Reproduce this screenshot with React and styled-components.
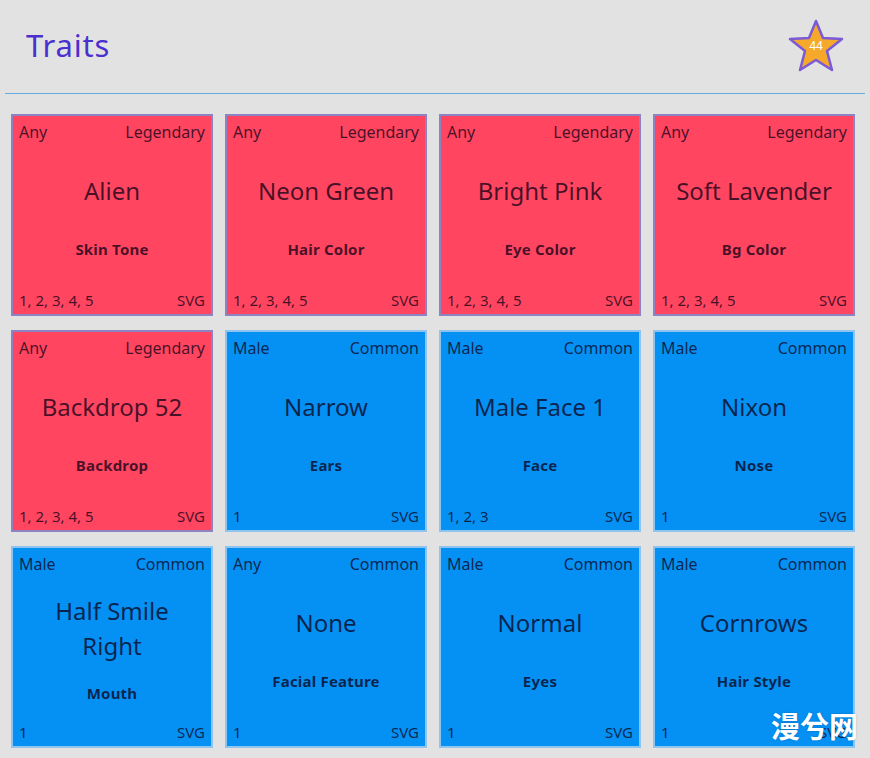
import React from 'react';
import styled, { createGlobalStyle } from 'styled-components';

const GlobalStyle = createGlobalStyle`
  body {
    margin: 0;
    background: #e2e2e2;
    font-family: "Noto Sans", "Liberation Sans", sans-serif;
  }
`;

const Page = styled.div`
  position: relative;
  width: 870px;
  height: 758px;
  overflow: hidden;
  background: #e2e2e2;
`;

const Header = styled.header`
  display: flex;
  align-items: center;
  justify-content: space-between;
  height: 93px;
  margin: 0 5px;
  padding: 0 20px 0 21px;
  border-bottom: 1px solid #68ade0;
`;

const Title = styled.h1`
  margin: 0 0 4px;
  font-size: 31px;
  font-weight: 400;
  color: #4a30cf;
  letter-spacing: 0.8px;
`;

const StarWrap = styled.div`
  position: relative;
  width: 58px;
  height: 56px;
  margin-bottom: 2px;
`;

const StarCount = styled.span`
  position: absolute;
  left: 0;
  right: 0;
  top: 21px;
  text-align: center;
  font-size: 12px;
  color: #ffffff;
  line-height: 14px;
`;

const Grid = styled.div`
  display: grid;
  grid-template-columns: repeat(4, 202px);
  grid-auto-rows: 202px;
  column-gap: 12px;
  row-gap: 14px;
  padding: 20px 0 0 11px;
`;

const Card = styled.div`
  box-sizing: border-box;
  display: flex;
  flex-direction: column;
  padding: 6px 6px 4px;
  background: ${p => (p.$legendary ? '#ff4560' : '#0590f4')};
  border: 2px solid ${p => (p.$legendary ? '#8c84c2' : '#8ec4ee')};
  color: rgba(10, 0, 20, 0.75);
`;

const Row = styled.div`
  display: flex;
  justify-content: space-between;
  font-size: ${p => (p.$top ? '16px' : '15px')};
  line-height: 20px;
`;

const Middle = styled.div`
  flex: 1;
  display: flex;
  flex-direction: column;
  justify-content: space-evenly;
  align-items: center;
  text-align: center;
  padding: 0 8px;
`;

const Name = styled.div`
  font-size: 24px;
  line-height: 35px;
`;

const Category = styled.div`
  font-size: 15px;
  font-weight: 700;
  line-height: 20px;
  letter-spacing: 0.2px;
`;

const Watermark = styled.div`
  position: absolute;
  right: 12px;
  bottom: 12px;
  font-family: "Noto Sans CJK SC", sans-serif;
  font-size: 29px;
  font-weight: 700;
  color: #ffffff;
  text-shadow: 0 0 2px rgba(0, 0, 0, 0.25);
`;

const traits = [
  { gender: 'Any', rarity: 'Legendary', name: 'Alien', cat: 'Skin Tone', ids: '1, 2, 3, 4, 5' },
  { gender: 'Any', rarity: 'Legendary', name: 'Neon Green', cat: 'Hair Color', ids: '1, 2, 3, 4, 5' },
  { gender: 'Any', rarity: 'Legendary', name: 'Bright Pink', cat: 'Eye Color', ids: '1, 2, 3, 4, 5' },
  { gender: 'Any', rarity: 'Legendary', name: 'Soft Lavender', cat: 'Bg Color', ids: '1, 2, 3, 4, 5' },
  { gender: 'Any', rarity: 'Legendary', name: 'Backdrop 52', cat: 'Backdrop', ids: '1, 2, 3, 4, 5' },
  { gender: 'Male', rarity: 'Common', name: 'Narrow', cat: 'Ears', ids: '1' },
  { gender: 'Male', rarity: 'Common', name: 'Male Face 1', cat: 'Face', ids: '1, 2, 3' },
  { gender: 'Male', rarity: 'Common', name: 'Nixon', cat: 'Nose', ids: '1' },
  { gender: 'Male', rarity: 'Common', name: 'Half Smile Right', cat: 'Mouth', ids: '1' },
  { gender: 'Any', rarity: 'Common', name: 'None', cat: 'Facial Feature', ids: '1' },
  { gender: 'Male', rarity: 'Common', name: 'Normal', cat: 'Eyes', ids: '1' },
  { gender: 'Male', rarity: 'Common', name: 'Cornrows', cat: 'Hair Style', ids: '1' },
];

function Star({ count }) {
  return (
    <StarWrap>
      <svg width="58" height="56" viewBox="0 0 58 56">
        <polygon
          points="29,3 36,20 55,21 40,33 45,52 29,42 13,52 18,33 3,21 22,20"
          fill="#f5a82a"
          stroke="#7a5ad6"
          strokeWidth="2.5"
          strokeLinejoin="round"
        />
      </svg>
      <StarCount>{count}</StarCount>
    </StarWrap>
  );
}

export default function App() {
  return (
    <Page>
      <GlobalStyle />
      <Header>
        <Title>Traits</Title>
        <Star count={44} />
      </Header>
      <Grid>
        {traits.map(t => (
          <Card key={t.name} $legendary={t.rarity === 'Legendary'}>
            <Row $top>
              <span>{t.gender}</span>
              <span>{t.rarity}</span>
            </Row>
            <Middle>
              <Name>{t.name}</Name>
              <Category>{t.cat}</Category>
            </Middle>
            <Row>
              <span>{t.ids}</span>
              <span>SVG</span>
            </Row>
          </Card>
        ))}
      </Grid>
      <Watermark>漫兮网</Watermark>
    </Page>
  );
}
